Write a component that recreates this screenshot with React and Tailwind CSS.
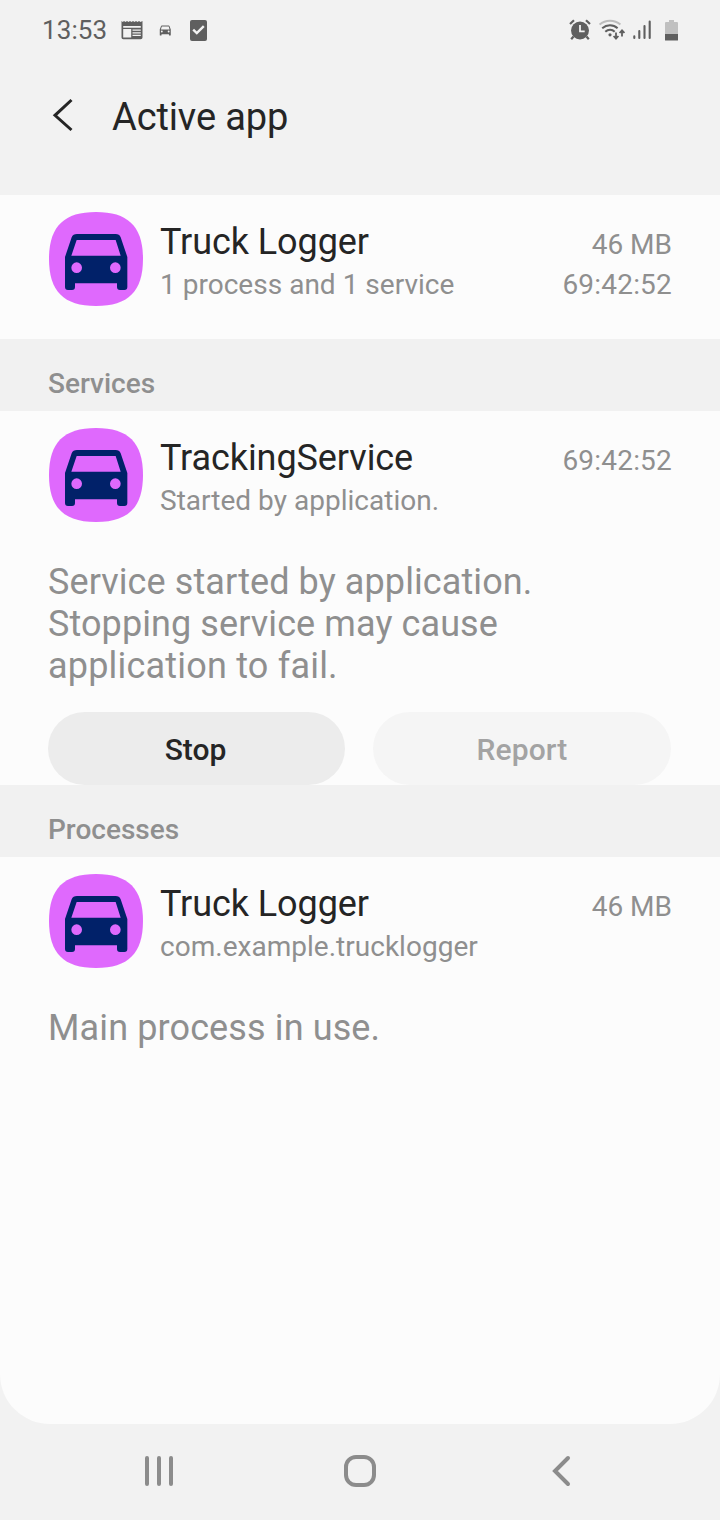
function StatusBar() {
  return (
    <header className="flex h-[60px] shrink-0 items-center justify-between pl-[42px] pr-[40px] text-[#5f5f5f]">
      <div className="flex items-center">
        <span className="w-[79px] text-[26px] leading-[30px] tracking-[0.1px]">13:53</span>
        <svg className="h-[20px] w-[22px]" viewBox="0 0 22 20" fill="currentColor">
          <path fillRule="evenodd" d="M0.5 1l1.3 1L3 1l1.5 1L6 1l1.5 1L9 1l1.5 1L12 1l1.5 1L15 1l1.5 1L18 1l1.5 1L21.5 1v16.5a1.8 1.8 0 0 1-1.8 1.8H2.3a1.8 1.8 0 0 1-1.8-1.8zM2.2 6v1.7h17.6V6zM2.2 9v8.4h8V9zM11.5 9.5v1.2h8.3V9.5zM11.5 12.2v1.2h8.3v-1.2zM11.5 14.8V16h8.3v-1.2z" />
        </svg>
        <svg className="ml-[16px] h-[11px] w-[12px]" viewBox="62 98 204 176" fill="currentColor">
          <CarShape />
        </svg>
        <svg className="ml-[19px] h-[21px] w-[17px]" viewBox="0 0 17 21">
          <rect width="17" height="21" rx="2" fill="currentColor" />
          <path d="M3.2 9.6l3.6 3.4 7-6.8" fill="none" stroke="#f2f2f2" strokeWidth="2.4" />
        </svg>
      </div>
      <div className="flex items-center">
        <svg className="h-[22px] w-[22px]" viewBox="0 0 22 22" fill="none" stroke="currentColor">
          <circle cx="11" cy="11.5" r="9" fill="currentColor" stroke="none" />
          <path d="M1 5L5 1.3M21 5L17 1.3M4.5 17.5l-2.3 2.7M17.5 17.5l2.3 2.7" strokeWidth="2.2" />
          <path d="M11 6v6.3h4.7" stroke="#f2f2f2" strokeWidth="1.8" />
        </svg>
        <svg className="ml-[8px] h-[22px] w-[26px]" viewBox="0 0 26 22" fill="none" stroke="currentColor" strokeWidth="2">
          <path d="M0.6 5.6C6.5 0.4 15.5 0.4 21.4 5.6" stroke="#bcbcbc" />
          <path d="M3.2 9.2c4.6-4 11-4 15.4 0M6.3 12.8c2.8-2.7 6.8-2.7 9.4 0" />
          <circle cx="11" cy="15.8" r="1.6" fill="currentColor" stroke="none" />
          <path d="M17 13.5v6M14.6 17l2.4 2.6 2.4-2.6M23 17.5v-6M20.6 14l2.4-2.6 2.4 2.6" strokeWidth="1.8" />
        </svg>
        <svg className="ml-[8px] h-[20px] w-[19px]" viewBox="0 0 19 20" stroke="currentColor" strokeWidth="2.1" strokeLinecap="round">
          <path d="M1.3 16.3V18M6.3 11v7M11.5 6v12M16.7 1.5V18" />
        </svg>
        <svg className="ml-[13px] mr-px h-[21px] w-[14px]" viewBox="0 0 14 21">
          <path d="M4 0h5v2h3a1 1 0 0 1 1 1v11H0V3a1 1 0 0 1 1-1h3z" fill="#c0c0c0" />
          <path d="M0 14h13v6a.6.6 0 0 1-.6.6H.6A.6.6 0 0 1 0 20z" fill="currentColor" />
        </svg>
      </div>
    </header>
  );
}

function CarShape() {
  return (
    <path
      fillRule="evenodd"
      d="M111 102H227Q238 102 242 112L262 171V261Q262 270 253 270H240Q231 270 231 261V250H105V261Q105 270 96 270H84Q75 270 75 261V171L95 112Q99 102 111 102ZM110 120L94 167H242L227 120ZM110 187a16 16 0 1 0 0 32a16 16 0 1 0 0-32ZM226 187a16 16 0 1 0 0 32a16 16 0 1 0 0-32Z"
    />
  );
}

function AppIcon() {
  return (
    <svg className="ml-px h-[94px] w-[94px] shrink-0" viewBox="27 36 282 282">
      <path
        fill="#df69fd"
        d="M168 36C265 36 309 80 309 177S265 318 168 318S27 274 27 177S71 36 168 36Z"
      />
      <g fill="#012169">
        <CarShape />
      </g>
    </svg>
  );
}

function AppRow({ title, subtitle, size, time }) {
  return (
    <div className="flex h-[128px] px-12 pt-[17px]">
      <AppIcon />
      <div className="ml-[17px] flex-1 pt-[9px]">
        <div className="text-[36px] leading-[42px] tracking-[-0.08px] text-[#252525]">{title}</div>
        <div className="mt-[5px] text-[28px] leading-[33px] tracking-[0.02px]">{subtitle}</div>
      </div>
      <div className="flex flex-col gap-[7px] pt-[16px] text-right text-[28px] leading-[33px]">
        {size && <div>{size}</div>}
        {time && <div className="tracking-[0.2px]">{time}</div>}
      </div>
    </div>
  );
}

function SectionHeader({ children }) {
  return (
    <h2 className="h-[72px] shrink-0 bg-[#f1f1f1] px-12 pt-[28px] text-[28px] font-medium leading-[33px]">
      {children}
    </h2>
  );
}

export default function App() {
  return (
    <div className="flex h-[1520px] w-[720px] flex-col overflow-hidden bg-[#f2f2f2] font-['Roboto',sans-serif] text-[#8f8f8f]">
      <StatusBar />
      <div className="flex h-[135px] shrink-0 items-start pl-[52px] pt-[35px] text-[#252525]">
        <svg className="mt-[3px] h-[34px] w-[22px]" viewBox="0 0 22 34" fill="none" stroke="currentColor" strokeWidth="3">
          <path d="M19.5 2L3 17.3L19.5 32" />
        </svg>
        <h1 className="ml-[38px] text-[38px] leading-[44px] tracking-[-0.12px]">Active app</h1>
      </div>
      <main className="flex h-[1229px] shrink-0 flex-col overflow-hidden rounded-b-[50px] bg-[#fcfcfc]">
        <section className="h-[144px] shrink-0">
          <AppRow title="Truck Logger" subtitle="1 process and 1 service" size="46 MB" time="69:42:52" />
        </section>
        <SectionHeader>Services</SectionHeader>
        <section className="h-[374px] shrink-0">
          <AppRow title="TrackingService" subtitle="Started by application." time="69:42:52" />
          <p className="px-12 pt-[22px] text-[36px] leading-[42px] tracking-[0.09px]">
            Service started by application.
            <br />
            Stopping service may cause
            <br />
            <span className="tracking-[0.2px]">application to fail.</span>
          </p>
          <div className="mt-[25px] flex gap-[28px] pl-12 pr-[49px] text-[30px] font-medium">
            <button className="h-[73px] w-[297px] rounded-full bg-[#ececec] pr-[2px] pt-px text-[#252525]">Stop</button>
            <button className="h-[73px] w-[298px] rounded-full bg-[#f5f5f5] pt-px tracking-[0.1px] text-[#a3a3a3]">Report</button>
          </div>
        </section>
        <SectionHeader>Processes</SectionHeader>
        <section>
          <AppRow title="Truck Logger" subtitle="com.example.trucklogger" size="46 MB" />
          <p className="px-12 pt-[22px] text-[36px] leading-[42px] tracking-[0.12px]">Main process in use.</p>
        </section>
      </main>
      <nav className="flex h-[94px] shrink-0 items-center justify-between pl-[144px] pr-[148px]">
        <svg className="h-[32px] w-[30px]" viewBox="0 0 30 32" stroke="#8c8c8c" strokeWidth="4" strokeLinecap="round">
          <path d="M3 3v26M15 3v26M27 3v26" />
        </svg>
        <svg className="-ml-[6px] h-[32px] w-[32px]" viewBox="0 0 32 32" fill="none" stroke="#8c8c8c" strokeWidth="4">
          <rect x="2" y="2" width="28" height="28" rx="10" />
        </svg>
        <svg className="h-[32px] w-[20px]" viewBox="0 0 20 32" fill="none" stroke="#8c8c8c" strokeWidth="4" strokeLinecap="round">
          <path d="M16 3L3 16L16 29" />
        </svg>
      </nav>
    </div>
  );
}
